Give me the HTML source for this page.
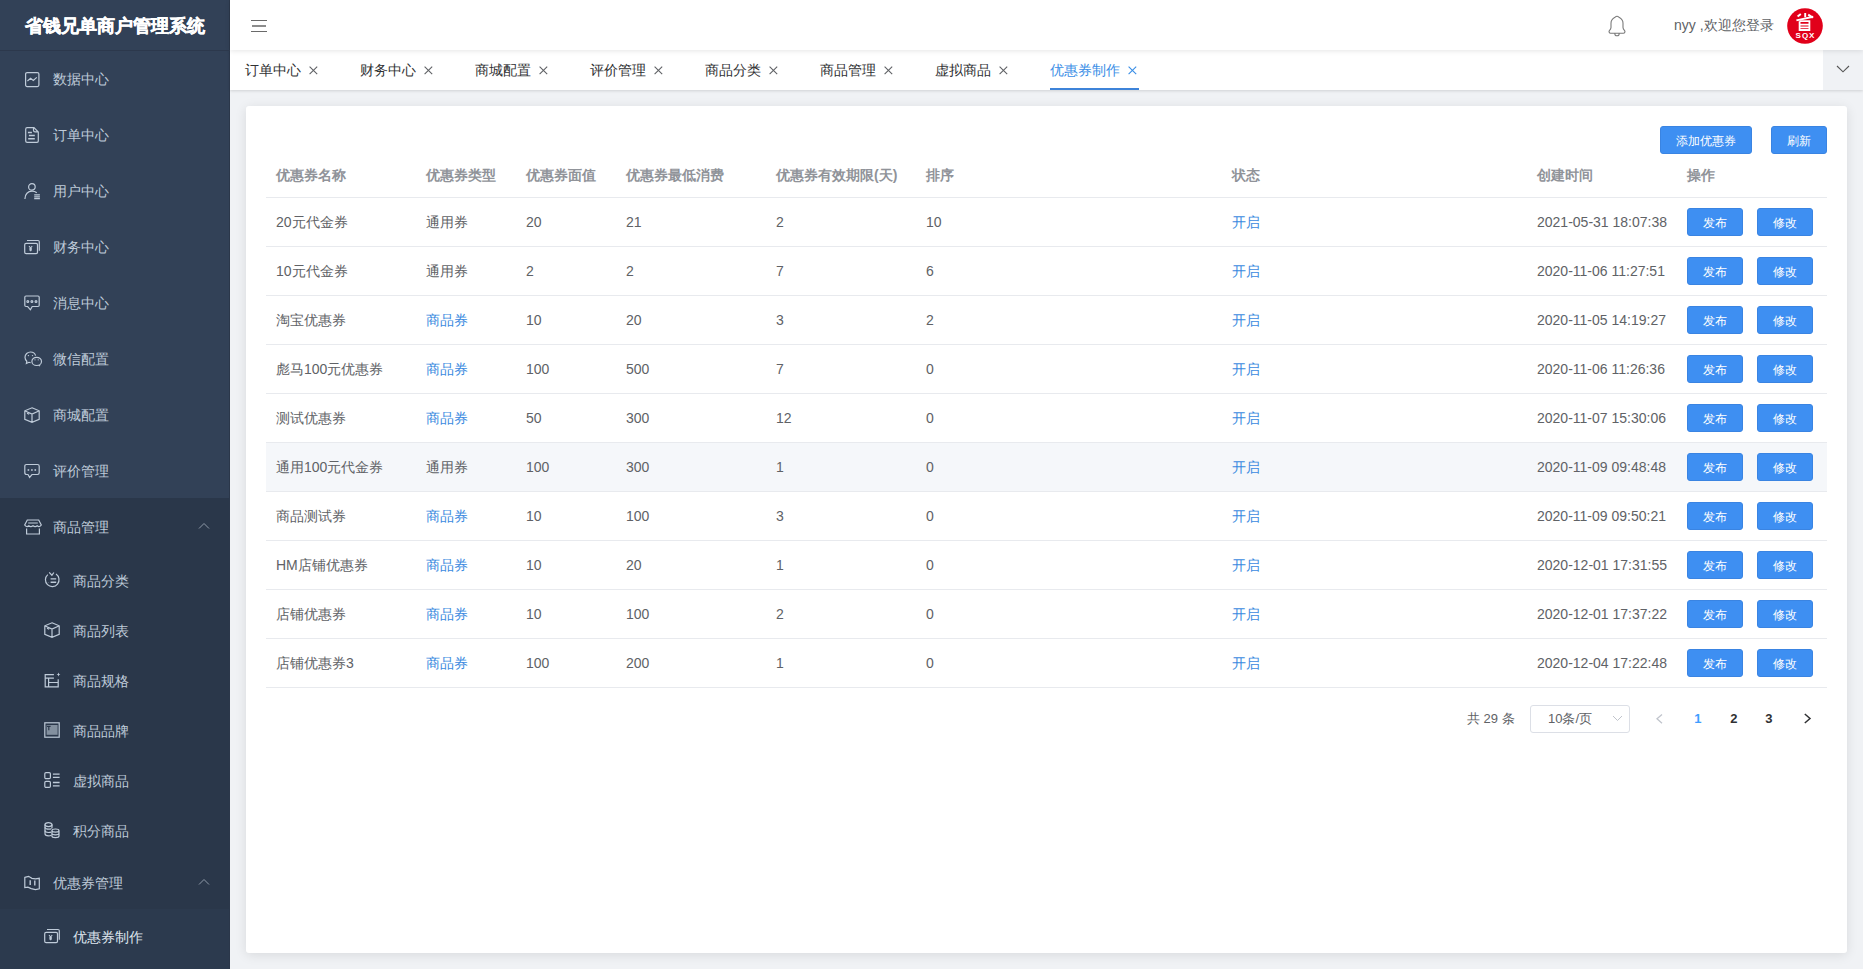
<!DOCTYPE html>
<html><head><meta charset="utf-8">
<style>
*{box-sizing:border-box;margin:0;padding:0}
html,body{width:1863px;height:969px;overflow:hidden;background:#f0f2f5;font-family:"Liberation Sans",sans-serif;position:relative}
#side{position:absolute;left:0;top:0;width:230px;height:969px;background:#324157;}
#logo{position:absolute;left:0;top:1px;-webkit-text-stroke:0.4px #fff;width:230px;height:50px;color:#fff;font-weight:bold;font-size:18px;line-height:50px;text-align:center;}
.sm-bg{position:absolute;left:0;width:230px;background:#2a374a}
.mi{position:absolute;left:0;width:230px;height:56px;color:#bfcbd9;font-size:14px;}
.mi .t{position:absolute;left:53px;top:0;line-height:56px;}
.mi svg{position:absolute;left:23px;top:20px;}
.sub{position:absolute;left:0;width:230px;height:50px;color:#bfcbd9;font-size:14px;}
.sub .t{position:absolute;left:73px;top:0;line-height:50px;}
.sub svg{position:absolute;left:43px;top:17px;}
#nav{position:absolute;left:230px;top:0;width:1633px;height:50px;background:#fff;box-shadow:0 1px 5px rgba(0,0,0,.1);z-index:2}
#tags{position:absolute;left:230px;top:50px;width:1633px;height:40px;background:#fff;box-shadow:0 1px 3px 0 rgba(0,0,0,.12),0 0 3px 0 rgba(0,0,0,.04);}
.tag{position:absolute;top:50px;height:40px;line-height:40px;font-size:14px;color:#303133;white-space:nowrap}
#card{position:absolute;left:246px;top:106px;width:1601px;height:847px;background:#fff;border-radius:3px;box-shadow:0 2px 12px 0 rgba(0,0,0,.1);}
.btn{position:absolute;height:28px;line-height:26px;padding-top:1px;background:#3e8ff2;border:1px solid #3a84e2;color:#fff;font-size:12px;text-align:center;border-radius:3px;}
.th{position:absolute;font-size:14px;font-weight:bold;color:#909399;line-height:20px;top:165px;white-space:nowrap}
.line{position:absolute;left:266px;width:1561px;height:1px;background:#e8eaee}
.hov{position:absolute;left:266px;width:1561px;height:48px;background:#f5f7fa}
.td{position:absolute;line-height:48px;padding-top:1px;font-size:14px;color:#606266;white-space:nowrap;}
.blue{color:#3b8ae0}
.ic{position:absolute;fill:none;stroke:#bfcbd9;stroke-width:1.2;overflow:visible}
.ic .f{fill:#bfcbd9;stroke:none}
.arr{position:absolute;fill:none;stroke:#9aa4b2;stroke-width:0.9}
.mt{position:absolute;left:53px;height:56px;line-height:56px;padding-top:1px;font-size:14px;color:#bfcbd9;white-space:nowrap}
.st{position:absolute;left:73px;height:50px;line-height:50px;padding-top:2px;font-size:14px;color:#bfcbd9;white-space:nowrap}
.act-bg{position:absolute;left:0;width:230px;background:#2c3a4e}
.st.act{color:#dfe6ee}
.abs{position:absolute;z-index:3}
#tagdd{position:absolute;left:1823px;top:50px;width:40px;height:40px;background:#f0f2f5}
.pg{top:709px;width:35.5px;text-align:center;line-height:20px;font-size:13px;font-weight:bold;color:#303133}

</style></head><body>
<div id="side">
  <div id="logo">省钱兄单商户管理系统</div>
  <div class="abs" style="left:0;top:50px;width:230px;height:1px;background:#2c384c"></div>
  <div class="abs" style="left:229px;top:0;width:1px;height:969px;background:#2b374a;z-index:1"></div>
  <div class="sm-bg" style="top:498px;height:471px"></div>
  <div class="act-bg" style="top:909px;height:60px"></div>
  <svg class="ic" style="left:24px;top:71px" width="16" height="16" viewBox="0 0 16 16"><rect x="1.6" y="1.6" width="13.3" height="14" rx="1.5"/><polyline points="3.4,10 6.6,7.3 9.3,9.4 12.8,6.4"/></svg>
  <div class="mt" style="top:50px">数据中心</div>
  <svg class="ic" style="left:24px;top:127px" width="16" height="16" viewBox="0 0 16 16"><path d="M1.7,2.2 Q1.7,0.7 3.2,0.7 H10 L14.3,5 V14 Q14.3,15.3 13,15.3 H3.2 Q1.7,15.3 1.7,14 Z M9.5,0.9 V3.2 Q9.5,4.8 11,4.8 H14"/><path d="M3.9,5.4 H7.9 M4.9,8.5 H10.8 M4.2,11.8 H10.8" stroke-width="1.5"/></svg>
  <div class="mt" style="top:106px">订单中心</div>
  <svg class="ic" style="left:24px;top:183px" width="16" height="16" viewBox="0 0 16 16"><circle cx="7.9" cy="3.9" r="3.3"/><path d="M0.9,16 C0.9,11 4,8.2 8,8.2 C10,8.2 11.6,8.8 12.8,9.7"/><path d="M10.2,11.9 H15.9 M10.2,13.8 H15.9 M10.2,15.6 H15.9"/></svg>
  <div class="mt" style="top:162px">用户中心</div>
  <svg class="ic" style="left:24px;top:239px" width="16" height="16" viewBox="0 0 16 16"><rect x="0.7" y="4.3" width="12.8" height="10.4" rx="1.4"/><path d="M3,1.5 H14 Q15.3,1.5 15.3,2.8 V11.8"/><path d="M5,7.2 L6.6,9 L8.2,7.2 M6.6,9 V12.2 M5.2,9.8 H8 M5.2,11 H8" stroke-width="1.1"/></svg>
  <div class="mt" style="top:218px">财务中心</div>
  <svg class="ic" style="left:24px;top:295px" width="16" height="16" viewBox="0 0 16 16"><path d="M2,1 H14 Q15.2,1 15.2,2.2 V10.3 Q15.2,11.5 14,11.5 H8.2 L6.4,14.8 L3.7,11.5 H2 Q0.8,11.5 0.8,10.3 V2.2 Q0.8,1 2,1 Z"/><circle cx="3.8" cy="6.4" r="0.9"/><circle cx="7.9" cy="6.4" r="0.9"/><circle cx="12" cy="6.4" r="0.9"/></svg>
  <div class="mt" style="top:274px">消息中心</div>
  <svg class="ic" style="left:24px;top:351px" width="18" height="16" viewBox="-1 0 18 16"><path d="M10.6,4.6 C10,2.6 8,1 5.6,1 C2.6,1 0,3.3 0,6.3 C0,7.8 0.7,9.2 1.8,10.2 L1.4,12.5 L3.9,11.3 C4.5,11.5 5,11.6 5.6,11.6"/><ellipse cx="11.7" cy="10.4" rx="4.8" ry="4.1"/><path d="M13.8,14 L15,15.2"/><circle cx="3.4" cy="4.6" r="0.7" class="f"/><circle cx="7.5" cy="4.6" r="0.7" class="f"/><circle cx="10" cy="8.8" r="0.6" class="f"/><circle cx="13.2" cy="8.8" r="0.6" class="f"/></svg>
  <div class="mt" style="top:330px">微信配置</div>
  <svg class="ic" style="left:24px;top:407px" width="16" height="16" viewBox="0 0 16 16"><path d="M8,0.8 L15.2,3.8 V12.3 L8,15.3 L0.8,12.3 V3.8 Z M1.2,4 L8,7 L14.8,4 M8,7 V15 M3,6.3 L5.2,7.2"/></svg>
  <div class="mt" style="top:386px">商城配置</div>
  <svg class="ic" style="left:24px;top:463px" width="16" height="16" viewBox="0 0 16 16"><path d="M2.5,1.5 H13.5 Q15.2,1.5 15.2,3.2 V9.8 Q15.2,11.5 13.5,11.5 H8 L5.6,14.4 L4,11.5 H2.5 Q0.8,11.5 0.8,9.8 V3.2 Q0.8,1.5 2.5,1.5 Z"/><rect x="3.6" y="6.2" width="1.6" height="1.6" class="f"/><rect x="7.1" y="6.2" width="1.6" height="1.6" class="f"/><rect x="10.5" y="6.2" width="1.6" height="1.6" class="f"/></svg>
  <div class="mt" style="top:442px">评价管理</div>
  <svg class="ic" style="left:24px;top:519px" width="18" height="16" viewBox="-1 0 18 16"><path d="M2.3,1 H13.7 L16.3,6 Q14.5,8.6 12.2,6.8 Q10.2,8.6 8,6.8 Q5.8,8.6 3.8,6.8 Q1.5,8.6 -0.3,6 Z"/><path d="M1.6,9.6 V15 H14.4 V9.6"/><path d="M3.2,4 H12.8" stroke-width="1.4" opacity=".75"/></svg>
  <div class="mt" style="top:498px">商品管理</div>
  <svg class="arr" style="left:198px;top:522px" width="12" height="8" viewBox="0 0 12 8"><path d="M1,6.5 L6,1.5 L11,6.5"/></svg>
  <svg class="ic" style="left:44px;top:572px" width="16" height="16" viewBox="0 0 16 16"><path d="M3.8,2.6 A6.8,6.8 0 1 0 12,2.1"/><path d="M5.2,0.4 L7.9,3.2 L9.9,0.5"/><path d="M4.4,6.9 V7.1 M4.4,10.3 V10.5 M6.6,6.9 H12.2 M6.6,10.3 H12.2" stroke-width="1.4"/></svg>
  <div class="st" style="top:554px">商品分类</div>
  <svg class="ic" style="left:44px;top:622px" width="16" height="16" viewBox="0 0 16 16"><path d="M8,0.8 L15.2,3.8 V12.3 L8,15.3 L0.8,12.3 V3.8 Z M1.2,4 L8,7 L14.8,4 M8,7 V15 M3,6.3 L5.2,7.2"/></svg>
  <div class="st" style="top:604px">商品列表</div>
  <svg class="ic" style="left:44px;top:672px" width="16" height="16" viewBox="0 0 16 16"><path d="M9.9,2.6 H1.2 V14.8 H14.2 V7.2 M1.2,6.2 H9.9 M4.6,6.2 V14.8 M4.6,10.5 H14.2"/><path d="M14.5,0.6 Q14.7,2.4 16.4,2.6 Q14.7,2.8 14.5,4.6 Q14.3,2.8 12.6,2.6 Q14.3,2.4 14.5,0.6 Z" class="f"/></svg>
  <div class="st" style="top:654px">商品规格</div>
  <svg class="ic" style="left:44px;top:722px" width="16" height="16" viewBox="0 0 16 16"><rect x="0.8" y="0.8" width="14.4" height="14.4"/><rect x="2.6" y="3" width="11" height="9.8" class="f" opacity=".6" stroke="none"/><path d="M3,4.3 H6.6 M4.8,4.3 V8.3" stroke="#2a374a" stroke-width="1.2"/></svg>
  <div class="st" style="top:704px">商品品牌</div>
  <svg class="ic" style="left:44px;top:772px" width="16" height="16" viewBox="0 0 16 16"><rect x="0.8" y="0.6" width="5.6" height="6" rx="1.2"/><rect x="0.8" y="9.4" width="5.6" height="6" rx="1.2"/><path d="M8.9,2.1 H15.6 M8.9,5.4 H15.6 M8.9,10.5 H15.6 M8.9,13.8 H15.6" stroke-width="1.3"/></svg>
  <div class="st" style="top:754px">虚拟商品</div>
  <svg class="ic" style="left:44px;top:822px" width="16" height="16" viewBox="0 0 16 16"><path d="M7.4,6.5 C7.7,6.3 8,6 8,5.5 V2.6 C8,1.4 5.8,0.6 4.5,0.6 C3,0.6 1,1.4 1,2.6 V11.8 C1,13 3,13.8 4.5,13.8 C5.4,13.8 6.6,13.6 7.2,13.2"/><path d="M1,2.6 C1,3.8 3,4.6 4.5,4.6 C6,4.6 8,3.8 8,2.6 M1,5.3 C1,6.5 3,7.2 4.5,7.2 C5.3,7.2 6.3,7 7,6.8 M1,8.6 C1,9.8 3,10.5 4.5,10.5 C5.4,10.5 6.3,10.4 7,10.1"/><path d="M7.9,8.6 C7.9,7.6 9.5,7 11.5,7 C13.5,7 15,7.6 15,8.6 V14 C15,15 13.5,15.6 11.5,15.6 C9.5,15.6 7.9,15 7.9,14 Z M7.9,8.6 C7.9,9.6 9.5,10.2 11.5,10.2 C13.5,10.2 15,9.6 15,8.6 M7.9,11.3 C7.9,12.3 9.5,12.8 11.5,12.8 C13.5,12.8 15,12.3 15,11.3"/></svg>
  <div class="st" style="top:804px">积分商品</div>
  <svg class="ic" style="left:24px;top:875px" width="16" height="16" viewBox="0 0 16 16"><path d="M0.8,2.4 L4.6,1.3 L7.9,3.3 L11.5,3.8 L15.3,3.3 V13.8 L11.5,14.6 L7.2,13.6 L3.9,12.2 L0.8,12.6 Z"/><path d="M6.2,5.2 V10 M10.8,5.6 V10.4" stroke-width="1.4"/></svg>
  <div class="mt" style="top:854px">优惠券管理</div>
  <svg class="arr" style="left:198px;top:878px" width="12" height="8" viewBox="0 0 12 8"><path d="M1,6.5 L6,1.5 L11,6.5"/></svg>
  <svg class="ic" style="left:44px;top:928px" width="16" height="16" viewBox="0 0 16 16"><rect x="0.7" y="4.3" width="12.8" height="10.4" rx="1.4"/><path d="M3,1.5 H14 Q15.3,1.5 15.3,2.8 V11.8"/><path d="M5,7.2 L6.6,9 L8.2,7.2 M6.6,9 V12.2 M5.2,9.8 H8 M5.2,11 H8" stroke-width="1.1"/></svg>
  <div class="st act" style="top:910px">优惠券制作</div>
</div>
<div id="nav"></div>
<div id="tags"></div>
<div id="tagdd"></div>
<svg class="abs" style="left:1836px;top:65px" width="14" height="8" viewBox="0 0 14 8"><path d="M1,1 L7,6.8 L13,1" fill="none" stroke="#555" stroke-width="1.1"/></svg>
<div class="tag" style="left:245px;color:#303133">订单中心</div>
<svg class="abs" style="left:309px;top:66px" width="9" height="9" viewBox="0 0 9 9"><path d="M0.6,0.6 L8.2,8.2 M8.2,0.6 L0.6,8.2" stroke="#606266" stroke-width="1.1"/></svg>
<div class="tag" style="left:360px;color:#303133">财务中心</div>
<svg class="abs" style="left:424px;top:66px" width="9" height="9" viewBox="0 0 9 9"><path d="M0.6,0.6 L8.2,8.2 M8.2,0.6 L0.6,8.2" stroke="#606266" stroke-width="1.1"/></svg>
<div class="tag" style="left:475px;color:#303133">商城配置</div>
<svg class="abs" style="left:539px;top:66px" width="9" height="9" viewBox="0 0 9 9"><path d="M0.6,0.6 L8.2,8.2 M8.2,0.6 L0.6,8.2" stroke="#606266" stroke-width="1.1"/></svg>
<div class="tag" style="left:590px;color:#303133">评价管理</div>
<svg class="abs" style="left:654px;top:66px" width="9" height="9" viewBox="0 0 9 9"><path d="M0.6,0.6 L8.2,8.2 M8.2,0.6 L0.6,8.2" stroke="#606266" stroke-width="1.1"/></svg>
<div class="tag" style="left:705px;color:#303133">商品分类</div>
<svg class="abs" style="left:769px;top:66px" width="9" height="9" viewBox="0 0 9 9"><path d="M0.6,0.6 L8.2,8.2 M8.2,0.6 L0.6,8.2" stroke="#606266" stroke-width="1.1"/></svg>
<div class="tag" style="left:820px;color:#303133">商品管理</div>
<svg class="abs" style="left:884px;top:66px" width="9" height="9" viewBox="0 0 9 9"><path d="M0.6,0.6 L8.2,8.2 M8.2,0.6 L0.6,8.2" stroke="#606266" stroke-width="1.1"/></svg>
<div class="tag" style="left:935px;color:#303133">虚拟商品</div>
<svg class="abs" style="left:999px;top:66px" width="9" height="9" viewBox="0 0 9 9"><path d="M0.6,0.6 L8.2,8.2 M8.2,0.6 L0.6,8.2" stroke="#606266" stroke-width="1.1"/></svg>
<div class="tag" style="left:1050px;color:#3a8ee6">优惠券制作</div>
<svg class="abs" style="left:1128px;top:66px" width="9" height="9" viewBox="0 0 9 9"><path d="M0.6,0.6 L8.2,8.2 M8.2,0.6 L0.6,8.2" stroke="#3a8ee6" stroke-width="1.1"/></svg>
<div class="abs" style="left:1050px;top:88px;width:89px;height:2px;background:#3d83d9"></div>
<div class="abs" style="left:251px;top:20px;width:16px;height:1px;background:#6a6a6a"></div>
<div class="abs" style="left:252px;top:25px;width:14px;height:2px;background:#8c8c8c"></div>
<div class="abs" style="left:251px;top:31px;width:16px;height:1px;background:#6a6a6a"></div>
<svg class="abs" style="left:1608px;top:15px" width="18" height="22" viewBox="0 0 18 22"><path d="M9,1.2 C7.8,1.2 7.4,2 6.6,2.6 C4.2,4 3,5.3 3,8.2 V12.6 C3,14 2.2,14.8 1.4,15.6 C0.6,16.6 1.2,18.2 2.6,18.2 H15.4 C16.8,18.2 17.4,16.6 16.6,15.6 C15.8,14.8 15,14 15,12.6 V8.2 C15,5.3 13.8,4 11.4,2.6 C10.6,2 10.2,1.2 9,1.2 Z M6.8,18.4 C6.8,20 7.8,20.8 9,20.8 C10.2,20.8 11.2,20 11.2,18.4" fill="none" stroke="#7a7a7a" stroke-width="1.1"/></svg>
<div class="abs" style="left:1674px;top:15px;line-height:20px;font-size:14px;color:#606266;white-space:nowrap">nyy ,欢迎您登录</div>
<svg class="abs" style="left:1787px;top:8px" width="36" height="36" viewBox="0 0 36 36"><circle cx="18" cy="18" r="17.8" fill="#e1001a"/><g stroke="#fff" stroke-width="1.9" fill="none" stroke-linecap="butt"><path d="M10.6,8.6 L13.8,6"/><path d="M18.2,5 V9.2"/><path d="M21.2,6.6 L25.8,9.6"/><path d="M26.2,8.8 L9.4,12.4"/><path d="M12.6,13.2 V22 H22.4 V13.2 H12.6 M12.6,16.6 H22.4 M12.6,19.3 H22.4" stroke-width="1.8"/></g></svg>
<div class="abs" style="left:1787px;top:31px;width:36px;text-align:center;font-size:8px;line-height:9px;color:#fff;font-weight:bold;letter-spacing:1px;padding-left:1px">SQX</div>
<div id="card"></div>
<div class="btn" style="left:1660px;top:126px;width:92px">添加优惠券</div>
<div class="btn" style="left:1771px;top:126px;width:56px">刷新</div>
<div class="th" style="left:276px">优惠券名称</div>
<div class="th" style="left:426px">优惠券类型</div>
<div class="th" style="left:526px">优惠券面值</div>
<div class="th" style="left:626px">优惠券最低消费</div>
<div class="th" style="left:776px">优惠券有效期限(天)</div>
<div class="th" style="left:926px">排序</div>
<div class="th" style="left:1232px">状态</div>
<div class="th" style="left:1537px">创建时间</div>
<div class="th" style="left:1687px">操作</div>
<div class="line" style="top:197px"></div>
<div class="line" style="top:246px"></div>
<div class="td" style="left:276px;top:197px">20元代金券</div>
<div class="td" style="left:426px;top:197px">通用券</div>
<div class="td" style="left:526px;top:197px">20</div>
<div class="td" style="left:626px;top:197px">21</div>
<div class="td" style="left:776px;top:197px">2</div>
<div class="td" style="left:926px;top:197px">10</div>
<div class="td blue" style="left:1232px;top:197px">开启</div>
<div class="td" style="left:1537px;top:197px">2021-05-31 18:07:38</div>
<div class="btn sm" style="left:1687px;top:208px;width:56px">发布</div>
<div class="btn sm" style="left:1757px;top:208px;width:56px">修改</div>
<div class="line" style="top:295px"></div>
<div class="td" style="left:276px;top:246px">10元代金券</div>
<div class="td" style="left:426px;top:246px">通用券</div>
<div class="td" style="left:526px;top:246px">2</div>
<div class="td" style="left:626px;top:246px">2</div>
<div class="td" style="left:776px;top:246px">7</div>
<div class="td" style="left:926px;top:246px">6</div>
<div class="td blue" style="left:1232px;top:246px">开启</div>
<div class="td" style="left:1537px;top:246px">2020-11-06 11:27:51</div>
<div class="btn sm" style="left:1687px;top:257px;width:56px">发布</div>
<div class="btn sm" style="left:1757px;top:257px;width:56px">修改</div>
<div class="line" style="top:344px"></div>
<div class="td" style="left:276px;top:295px">淘宝优惠券</div>
<div class="td blue" style="left:426px;top:295px">商品券</div>
<div class="td" style="left:526px;top:295px">10</div>
<div class="td" style="left:626px;top:295px">20</div>
<div class="td" style="left:776px;top:295px">3</div>
<div class="td" style="left:926px;top:295px">2</div>
<div class="td blue" style="left:1232px;top:295px">开启</div>
<div class="td" style="left:1537px;top:295px">2020-11-05 14:19:27</div>
<div class="btn sm" style="left:1687px;top:306px;width:56px">发布</div>
<div class="btn sm" style="left:1757px;top:306px;width:56px">修改</div>
<div class="line" style="top:393px"></div>
<div class="td" style="left:276px;top:344px">彪马100元优惠券</div>
<div class="td blue" style="left:426px;top:344px">商品券</div>
<div class="td" style="left:526px;top:344px">100</div>
<div class="td" style="left:626px;top:344px">500</div>
<div class="td" style="left:776px;top:344px">7</div>
<div class="td" style="left:926px;top:344px">0</div>
<div class="td blue" style="left:1232px;top:344px">开启</div>
<div class="td" style="left:1537px;top:344px">2020-11-06 11:26:36</div>
<div class="btn sm" style="left:1687px;top:355px;width:56px">发布</div>
<div class="btn sm" style="left:1757px;top:355px;width:56px">修改</div>
<div class="line" style="top:442px"></div>
<div class="td" style="left:276px;top:393px">测试优惠券</div>
<div class="td blue" style="left:426px;top:393px">商品券</div>
<div class="td" style="left:526px;top:393px">50</div>
<div class="td" style="left:626px;top:393px">300</div>
<div class="td" style="left:776px;top:393px">12</div>
<div class="td" style="left:926px;top:393px">0</div>
<div class="td blue" style="left:1232px;top:393px">开启</div>
<div class="td" style="left:1537px;top:393px">2020-11-07 15:30:06</div>
<div class="btn sm" style="left:1687px;top:404px;width:56px">发布</div>
<div class="btn sm" style="left:1757px;top:404px;width:56px">修改</div>
<div class="hov" style="top:443px"></div>
<div class="line" style="top:491px"></div>
<div class="td" style="left:276px;top:442px">通用100元代金券</div>
<div class="td" style="left:426px;top:442px">通用券</div>
<div class="td" style="left:526px;top:442px">100</div>
<div class="td" style="left:626px;top:442px">300</div>
<div class="td" style="left:776px;top:442px">1</div>
<div class="td" style="left:926px;top:442px">0</div>
<div class="td blue" style="left:1232px;top:442px">开启</div>
<div class="td" style="left:1537px;top:442px">2020-11-09 09:48:48</div>
<div class="btn sm" style="left:1687px;top:453px;width:56px">发布</div>
<div class="btn sm" style="left:1757px;top:453px;width:56px">修改</div>
<div class="line" style="top:540px"></div>
<div class="td" style="left:276px;top:491px">商品测试券</div>
<div class="td blue" style="left:426px;top:491px">商品券</div>
<div class="td" style="left:526px;top:491px">10</div>
<div class="td" style="left:626px;top:491px">100</div>
<div class="td" style="left:776px;top:491px">3</div>
<div class="td" style="left:926px;top:491px">0</div>
<div class="td blue" style="left:1232px;top:491px">开启</div>
<div class="td" style="left:1537px;top:491px">2020-11-09 09:50:21</div>
<div class="btn sm" style="left:1687px;top:502px;width:56px">发布</div>
<div class="btn sm" style="left:1757px;top:502px;width:56px">修改</div>
<div class="line" style="top:589px"></div>
<div class="td" style="left:276px;top:540px">HM店铺优惠券</div>
<div class="td blue" style="left:426px;top:540px">商品券</div>
<div class="td" style="left:526px;top:540px">10</div>
<div class="td" style="left:626px;top:540px">20</div>
<div class="td" style="left:776px;top:540px">1</div>
<div class="td" style="left:926px;top:540px">0</div>
<div class="td blue" style="left:1232px;top:540px">开启</div>
<div class="td" style="left:1537px;top:540px">2020-12-01 17:31:55</div>
<div class="btn sm" style="left:1687px;top:551px;width:56px">发布</div>
<div class="btn sm" style="left:1757px;top:551px;width:56px">修改</div>
<div class="line" style="top:638px"></div>
<div class="td" style="left:276px;top:589px">店铺优惠券</div>
<div class="td blue" style="left:426px;top:589px">商品券</div>
<div class="td" style="left:526px;top:589px">10</div>
<div class="td" style="left:626px;top:589px">100</div>
<div class="td" style="left:776px;top:589px">2</div>
<div class="td" style="left:926px;top:589px">0</div>
<div class="td blue" style="left:1232px;top:589px">开启</div>
<div class="td" style="left:1537px;top:589px">2020-12-01 17:37:22</div>
<div class="btn sm" style="left:1687px;top:600px;width:56px">发布</div>
<div class="btn sm" style="left:1757px;top:600px;width:56px">修改</div>
<div class="line" style="top:687px"></div>
<div class="td" style="left:276px;top:638px">店铺优惠券3</div>
<div class="td blue" style="left:426px;top:638px">商品券</div>
<div class="td" style="left:526px;top:638px">100</div>
<div class="td" style="left:626px;top:638px">200</div>
<div class="td" style="left:776px;top:638px">1</div>
<div class="td" style="left:926px;top:638px">0</div>
<div class="td blue" style="left:1232px;top:638px">开启</div>
<div class="td" style="left:1537px;top:638px">2020-12-04 17:22:48</div>
<div class="btn sm" style="left:1687px;top:649px;width:56px">发布</div>
<div class="btn sm" style="left:1757px;top:649px;width:56px">修改</div>
<div class="abs" style="left:1467px;top:709px;line-height:20px;font-size:13px;color:#606266;white-space:nowrap">共 29 条</div>
<div class="abs" style="left:1530px;top:705px;width:100px;height:28px;border:1px solid #dcdfe6;border-radius:3px;background:#fff"></div>
<div class="abs" style="left:1548px;top:709px;line-height:20px;font-size:13px;color:#606266;white-space:nowrap">10条/页</div>
<svg class="abs" style="left:1612px;top:715px" width="11" height="7" viewBox="0 0 11 7"><path d="M1,1 L5.5,5.5 L10,1" fill="none" stroke="#c0c4cc" stroke-width="1"/></svg>
<svg class="abs" style="left:1655px;top:713px" width="9" height="11" viewBox="0 0 9 11"><path d="M7,1.5 L2,5.8 L7,10.2" fill="none" stroke="#c0c4cc" stroke-width="1.3"/></svg>
<div class="abs pg" style="left:1680px;color:#409eff">1</div>
<div class="abs pg" style="left:1716px">2</div>
<div class="abs pg" style="left:1751px">3</div>
<svg class="abs" style="left:1803px;top:713px" width="9" height="11" viewBox="0 0 9 11"><path d="M1.8,1 L7,5.5 L1.8,10" fill="none" stroke="#303133" stroke-width="1.5"/></svg>
</body></html>
